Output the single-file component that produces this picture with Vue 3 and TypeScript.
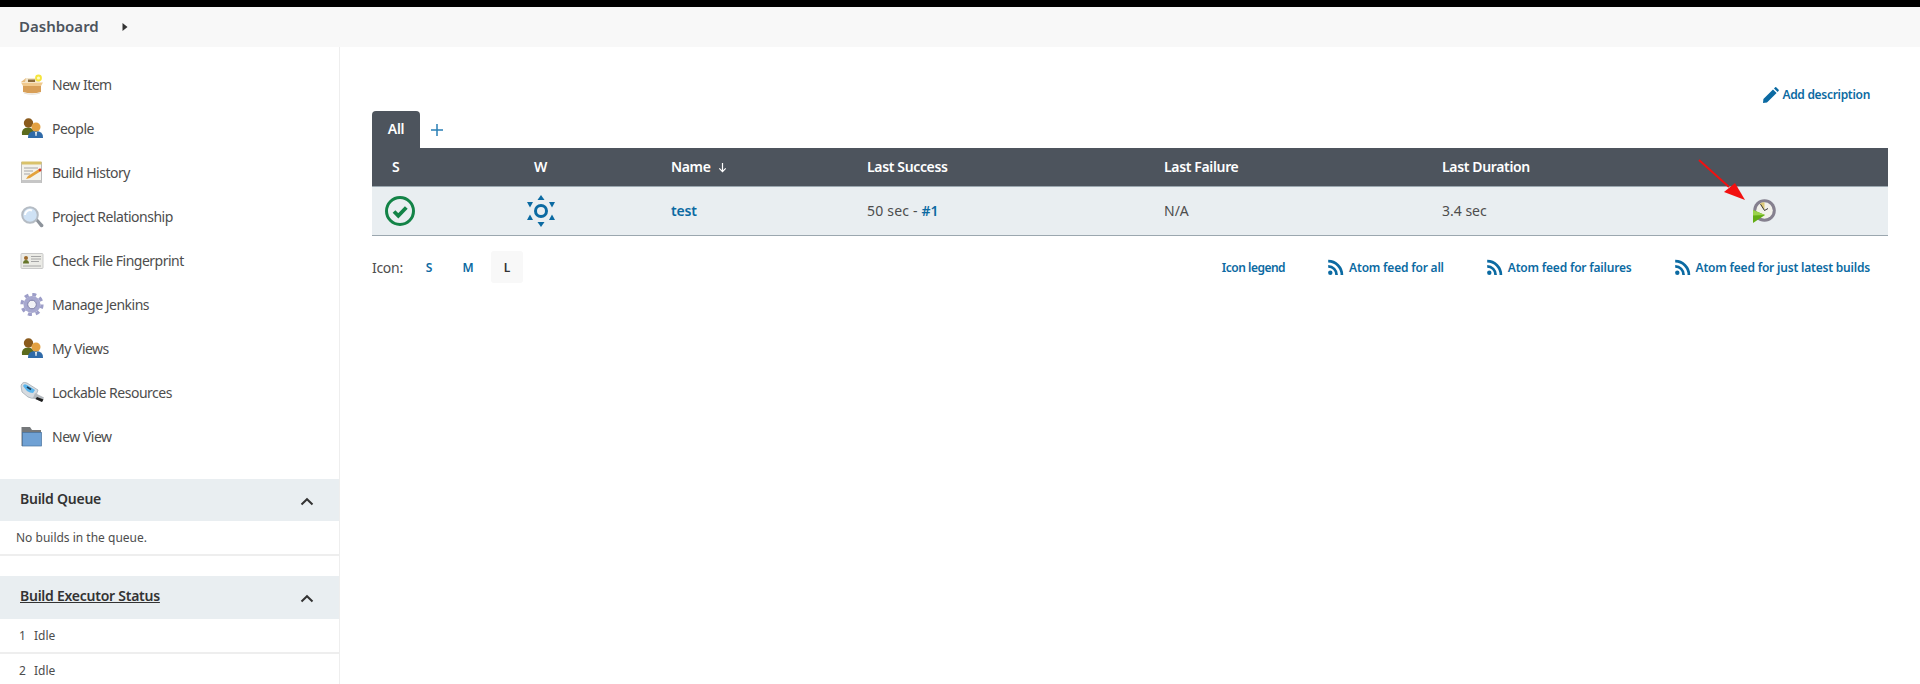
<script setup lang="ts">
const tasks = [
  { label: 'New Item', icon: 'box' },
  { label: 'People', icon: 'people' },
  { label: 'Build History', icon: 'notepad' },
  { label: 'Project Relationship', icon: 'search' },
  { label: 'Check File Fingerprint', icon: 'card' },
  { label: 'Manage Jenkins', icon: 'gear' },
  { label: 'My Views', icon: 'people' },
  { label: 'Lockable Resources', icon: 'usb' },
  { label: 'New View', icon: 'folder' },
]
const feeds = ['Atom feed for all', 'Atom feed for failures', 'Atom feed for just latest builds']
</script>

<template>
  <div class="page">
    <div class="topbar"></div>
    <nav class="crumbs">
      <span class="crumb">Dashboard</span>
      <svg class="caret" width="6" height="10" viewBox="0 0 6 10"><path d="M0.5 1 L5.5 5 L0.5 9 Z" fill="#333" /></svg>
    </nav>
    <div class="body">
      <aside class="side">
        <ul class="tasks">
          <li v-for="t in tasks" :key="t.label" class="task">
            <svg class="ticon" width="24" height="24" viewBox="0 0 24 24">
              <template v-if="t.icon === 'box'">
                <path d="M1 9 L6 5 H10 L8 9 Z" fill="#e9bd80" />
                <path d="M6 5 H18 L20 9 H5 Z" fill="#f3e6cc" />
                <path d="M8 6.500 H15 V9 H8 Z" fill="#8a6a3a" />
                <path d="M1 9.500 H23 L21 13 H3 Z" fill="#f0c98e" />
                <path d="M3 13 H21 V19 Q12 21.500 3 19 Z" fill="#d89f58" />
                <path d="M4 20 Q12 22.500 20 20" stroke="#e6e0d6" stroke-width="1.200" fill="none" />
                <circle cx="18.500" cy="5" r="3.400" fill="#f5e53c" />
                <circle cx="18.500" cy="5" r="1.600" fill="#fffbc0" />
              </template>
              <template v-else-if="t.icon === 'people'">
                <path d="M2 18 Q1 10.500 8 10.500 Q13 10.500 14 15 V18 Z" fill="#5c6b1d" />
                <circle cx="8.500" cy="6" r="4.700" fill="#8a5a1c" />
                <path d="M8 21 Q7.500 14 15.500 14 Q23.500 14 23 21 Z" fill="#2f6aa8" />
                <circle cx="16" cy="10" r="4.500" fill="#e3a040" />
                <path d="M15 15 H17 L16.500 19 H15.500 Z" fill="#e9eef1" />
              </template>
              <template v-else-if="t.icon === 'notepad'">
                <rect x="1.500" y="1.500" width="20" height="20" fill="#f3f2ec" stroke="#bbb" />
                <rect x="1.500" y="0.500" width="20" height="3" fill="#d9c26a" />
                <path d="M4 7 H18 M4 10 H13 M4 13 H10" stroke="#a6a6a6" stroke-width="1" />
                <path d="M6 18 L8 15 L19 8 L21 10 L10 17 Z" fill="#e3a23c" />
                <circle cx="20" cy="9" r="1.400" fill="#d8362a" />
                <rect x="1.500" y="19" width="20" height="3" fill="#c6c6c6" />
              </template>
              <template v-else-if="t.icon === 'search'">
                <path d="M15 15 L17 13 L23.500 20 Q23.500 23 20.500 22 Z" fill="#8d939b" />
                <circle cx="10" cy="10" r="7.800" fill="#cfe2f5" stroke="#b5bcc4" stroke-width="2" />
                <path d="M5 10 A5 5 0 0 1 12 5.500" stroke="#ffffff" stroke-width="2" fill="none" />
              </template>
              <template v-else-if="t.icon === 'card'">
                <rect x="1" y="4.500" width="22" height="15" rx="1" fill="#ebebe6" stroke="#c9c9c9" />
                <circle cx="6" cy="9" r="2" fill="#9d6a2a" />
                <path d="M3 14.500 Q3 11 6 11 Q9 11 9 14.500 Z" fill="#66752a" />
                <path d="M11 7.500 H21 M11 10 H21 M11 12.500 H19 M3 17 H21" stroke="#a6a6a6" stroke-width="1" />
              </template>
              <template v-else-if="t.icon === 'gear'">
                <circle cx="12" cy="11.500" r="8.500" fill="#a7a8cf" />
                <circle cx="12" cy="11.500" r="10" fill="none" stroke="#9d9ec8" stroke-width="3.200" stroke-dasharray="4 3.850" />
                <circle cx="12" cy="11.500" r="4.300" fill="#f1f1f6" stroke="#7f80a8" />
              </template>
              <template v-else-if="t.icon === 'usb'">
                <path d="M1 5 Q2 0 7 2 L18 9 L15 17 Q12 18 8 16 L2 11 Z" fill="#d6dbe0" stroke="#9aa3ab" stroke-width=".7" />
                <path d="M3 5 Q4 2 7 4 L15 9 L13 12 Q10 12 7 10 Z" fill="#58b4ec" />
                <path d="M7 6 L11 8.500" stroke="#1a3b56" stroke-width="1.600" />
                <path d="M15 12 L24 16.500 L22 21 L13 17 Z" fill="#b3b8bd" />
                <path d="M17 16 L23.500 18.500 L22 21 L15.500 18 Z" fill="#1d1d1d" />
              </template>
              <template v-else>
                <path d="M1.500 2 H10 L12 5 H21 V21 H1.500 Z" fill="#75787a" />
                <rect x="2.500" y="7.500" width="19" height="13.500" fill="#6fa1d4" stroke="#49729e" stroke-width=".7" />
              </template>
            </svg>
            <span>{{ t.label }}</span>
          </li>
        </ul>
        <section class="pane first">
          <header class="pane-head">
            <span>Build Queue</span>
            <svg width="14" height="9" viewBox="0 0 14 9"><path d="M1.500 7.500 L7 2.200 L12.500 7.500" fill="none" stroke="#333" stroke-width="2" /></svg>
          </header>
          <div class="pane-row queue">No builds in the queue.</div>
        </section>
        <section class="pane">
          <header class="pane-head tall">
            <span class="under">Build Executor Status</span>
            <svg width="14" height="9" viewBox="0 0 14 9"><path d="M1.500 7.500 L7 2.200 L12.500 7.500" fill="none" stroke="#333" stroke-width="2" /></svg>
          </header>
          <div class="pane-row exec"><span class="num">1</span>Idle</div>
          <div class="pane-row exec"><span class="num">2</span>Idle</div>
        </section>
      </aside>

      <main class="main">
        <div class="desc-row">
          <a class="link desc">
            <svg width="16" height="16" viewBox="0 0 16 16"><path d="M0 16 L0.400 12 L10 2.400 L13.600 6 L4 15.600 Z M11 1.400 L12.200 0.300 Q12.700 -0.100 13.200 0.300 L15.700 2.800 Q16.100 3.300 15.700 3.800 L14.600 5 Z" fill="#0b6aa2" /></svg>
            Add description
          </a>
        </div>
        <div class="tabs">
          <span class="tab">All</span>
          <svg class="plus" width="12" height="12" viewBox="0 0 12 12"><path d="M6 0 V12 M0 6 H12" stroke="#2a7fb5" stroke-width="1.500" /></svg>
        </div>
        <div class="table">
          <div class="grid thead">
            <span class="h-s">S</span>
            <span class="h-w">W</span>
            <span class="h-n">Name
              <svg class="sort" width="9" height="11" viewBox="0 0 9 11"><path d="M4.500 1 V9.500 M1.300 6.400 L4.500 9.600 L7.700 6.400" fill="none" stroke="#fff" stroke-width="1.200" /></svg>
            </span>
            <span>Last Success</span>
            <span>Last Failure</span>
            <span>Last Duration</span>
            <span></span>
          </div>
          <div class="grid tbody">
            <svg class="status" width="32" height="32" viewBox="0 0 32 32">
              <circle cx="16" cy="16" r="13.500" fill="none" stroke="#138347" stroke-width="3" />
              <path d="M10 16.500 L14.300 20.800 L22.300 12.500" fill="none" stroke="#138347" stroke-width="3.800" />
            </svg>
            <svg class="weather" width="30" height="32" viewBox="0 0 30 32">
              <circle cx="15" cy="16" r="5.500" fill="none" stroke="#0b6aa2" stroke-width="3" />
              <g fill="#0b6aa2">
                <path d="M15 0 L18.500 5 H11.500 Z" />
                <path d="M15 32 L18.500 27 H11.500 Z" />
                <path d="M1 7 L7 7 L4 12.500 Z" />
                <path d="M29 7 L23 7 L26 12.500 Z" />
                <path d="M1 25 L7 25 L4 19.500 Z" />
                <path d="M29 25 L23 25 L26 19.500 Z" />
              </g>
            </svg>
            <a class="link name cell">test</a>
            <span class="cell spaced">50 sec - <a class="link name">#1</a></span>
            <span class="cell">N/A</span>
            <span class="cell">3.4 sec</span>
            <svg class="build" width="24" height="24" viewBox="0 0 24 24">
              <circle cx="12.500" cy="11.500" r="11.300" fill="#85808f" />
              <circle cx="12.500" cy="11.500" r="8.300" fill="#f2f1ea" />
              <path d="M12.500 11.500 L8 4.600 A8.300 8.300 0 0 1 12.500 3.200 Z" fill="#dcc978" />
              <path d="M12.500 11.500 L8.500 5.200 M12.500 11.500 L16 9.500" stroke="#222" stroke-width=".9" />
              <path d="M1 11 L13 16 L1 24 Z" fill="#62ac14" />
              <path d="M1 11 L13 16 L1 16.500 Z" fill="#9ad24a" />
            </svg>
          </div>
        </div>
        <div class="foot">
          <div class="sizes">
            <span class="icon-label">Icon:</span>
            <a class="size link">S</a>
            <a class="size link">M</a>
            <span class="size on">L</span>
          </div>
          <div class="feeds">
            <a class="link legend">Icon legend</a>
            <a v-for="f in feeds" :key="f" class="link feed">
              <svg width="16" height="16" viewBox="0 0 16 16">
                <circle cx="2.300" cy="13.700" r="2.200" fill="#0b6aa2" />
                <path d="M0.200 7.400 A8.400 8.400 0 0 1 8.600 15.900 M0.200 2.200 A13.700 13.700 0 0 1 13.900 15.900" fill="none" stroke="#0b6aa2" stroke-width="2.700" />
              </svg>
              {{ f }}
            </a>
          </div>
        </div>
      </main>
    </div>
    <svg class="arrow" width="50" height="44" viewBox="0 0 50 44">
      <path d="M1 1 L31 28" stroke="#f21010" stroke-width="2" />
      <path d="M47 41 L26 33 L37 24 Z" fill="#f21010" />
    </svg>
  </div>
</template>

<style scoped>
.page {
  position: relative;
  width: 1920px;
  height: 684px;
  overflow: hidden;
  background: #fff;
  font-family: "Noto Sans", sans-serif;
  font-size: 14px;
  color: #333;
}
.topbar { height: 7px; background: #000; }
.crumbs {
  height: 40px;
  background: #f8f8f8;
  display: flex;
  align-items: center;
  padding-left: 19px;
  gap: 23px;
}
.crumb { font-weight: 600; font-size: 15px; color: #4d545d; margin-bottom: 2px; }
.body { display: flex; height: 637px; }
.side {
  width: 340px;
  flex: none;
  box-sizing: border-box;
  border-right: 1px solid #eee;
  padding-top: 16px;
}
.tasks { list-style: none; margin: 0; padding: 0; }
.task {
  height: 44px;
  display: flex;
  align-items: center;
  padding-left: 20px;
  gap: 8px;
  color: #4d4d4d;
  letter-spacing: -0.5px;
}
.task span { margin-bottom: 2px; }
.pane { margin-top: 20px; }
.pane-head {
  height: 42px;
  background: #e9eef1;
  display: flex;
  align-items: center;
  justify-content: space-between;
  padding: 0 25px 0 20px;
  font-weight: 600;
  font-size: 14px;
  color: #333;
  letter-spacing: -0.25px;
}
.pane-head.tall { height: 43px; }
.pane-head span { margin-bottom: 4px; }
.pane-head svg { margin-top: 2px; }
.under { text-decoration: underline; }
.pane-row { border-bottom: 2px solid #eee; color: #4d4d4d; font-size: 12px; height: 33px; line-height: 33px; }
.queue { padding-left: 16px; }
.exec { padding-left: 19px; }
.num { display: inline-block; width: 15px; }
.main { flex: 1; padding: 0 32px; min-width: 0; position: relative; }
.link { color: #0b6aa2; font-weight: 600; font-size: 13px; }
.desc-row { display: flex; justify-content: flex-end; height: 64px; padding-right: 18px; align-items: flex-end; box-sizing: border-box; }
.desc { display: flex; align-items: center; gap: 3px; font-size: 12px; margin-bottom: 8px; letter-spacing: -0.3px; }
.tabs { display: flex; align-items: center; height: 37px; }
.tab {
  width: 48px;
  height: 37px;
  box-sizing: border-box;
  padding-bottom: 2px;
  background: #4d545d;
  color: #fff;
  border-radius: 4px 4px 0 0;
  font-weight: 600;
  font-size: 14px;
  letter-spacing: -0.3px;
  display: flex;
  align-items: center;
  justify-content: center;
}
.plus { margin-left: 11px; }
.grid {
  display: grid;
  grid-template-columns: 155px 144px 196px 297px 278px 308px 1fr;
  align-items: center;
}
.thead {
  height: 38px;
  background: #4d545d;
  color: #fff;
  font-weight: 600;
  font-size: 14px;
  letter-spacing: -0.35px;
  padding-bottom: 2px;
  box-sizing: border-box;
}
.h-s { padding-left: 20px; }
.h-w { padding-left: 7px; }
.h-n { white-space: nowrap; }
.sort { vertical-align: -1px; margin-left: 4px; }
.tbody {
  height: 50px;
  box-sizing: border-box;
  background: #e9eef1;
  border-top: 1px solid #9ba7af;
  border-bottom: 1px solid #9ba7af;
  color: #4d4d4d;
  font-size: 14px;
}
.cell { margin-bottom: 2px; }
.spaced { letter-spacing: 0.2px; }
.status { margin-left: 12px; }
.weather { margin-left: -1px; }
.name { font-size: 14px; letter-spacing: -0.2px; }
.build { margin-left: 2px; }
.foot {
  display: flex;
  justify-content: space-between;
  align-items: center;
  margin-top: 15px;
  height: 32px;
}
.sizes { display: flex; align-items: center; }
.icon-label { font-size: 14px; color: #4d4d4d; width: 41px; letter-spacing: -0.3px; }
.size {
  width: 32px;
  height: 32px;
  display: flex;
  align-items: center;
  justify-content: center;
  font-weight: 600;
  font-size: 12px;
  margin-right: 7px;
  border-radius: 3px;
}
.size.on { background: #f8f8f8; color: #333; }
.feeds { display: flex; align-items: center; gap: 43px; padding-right: 18px; }
.feeds .link { font-size: 12px; }
.feeds .legend { letter-spacing: -0.5px; }
.feed { display: flex; align-items: center; gap: 5px; letter-spacing: -0.2px; }
.arrow { position: absolute; left: 1698px; top: 159px; }
</style>
